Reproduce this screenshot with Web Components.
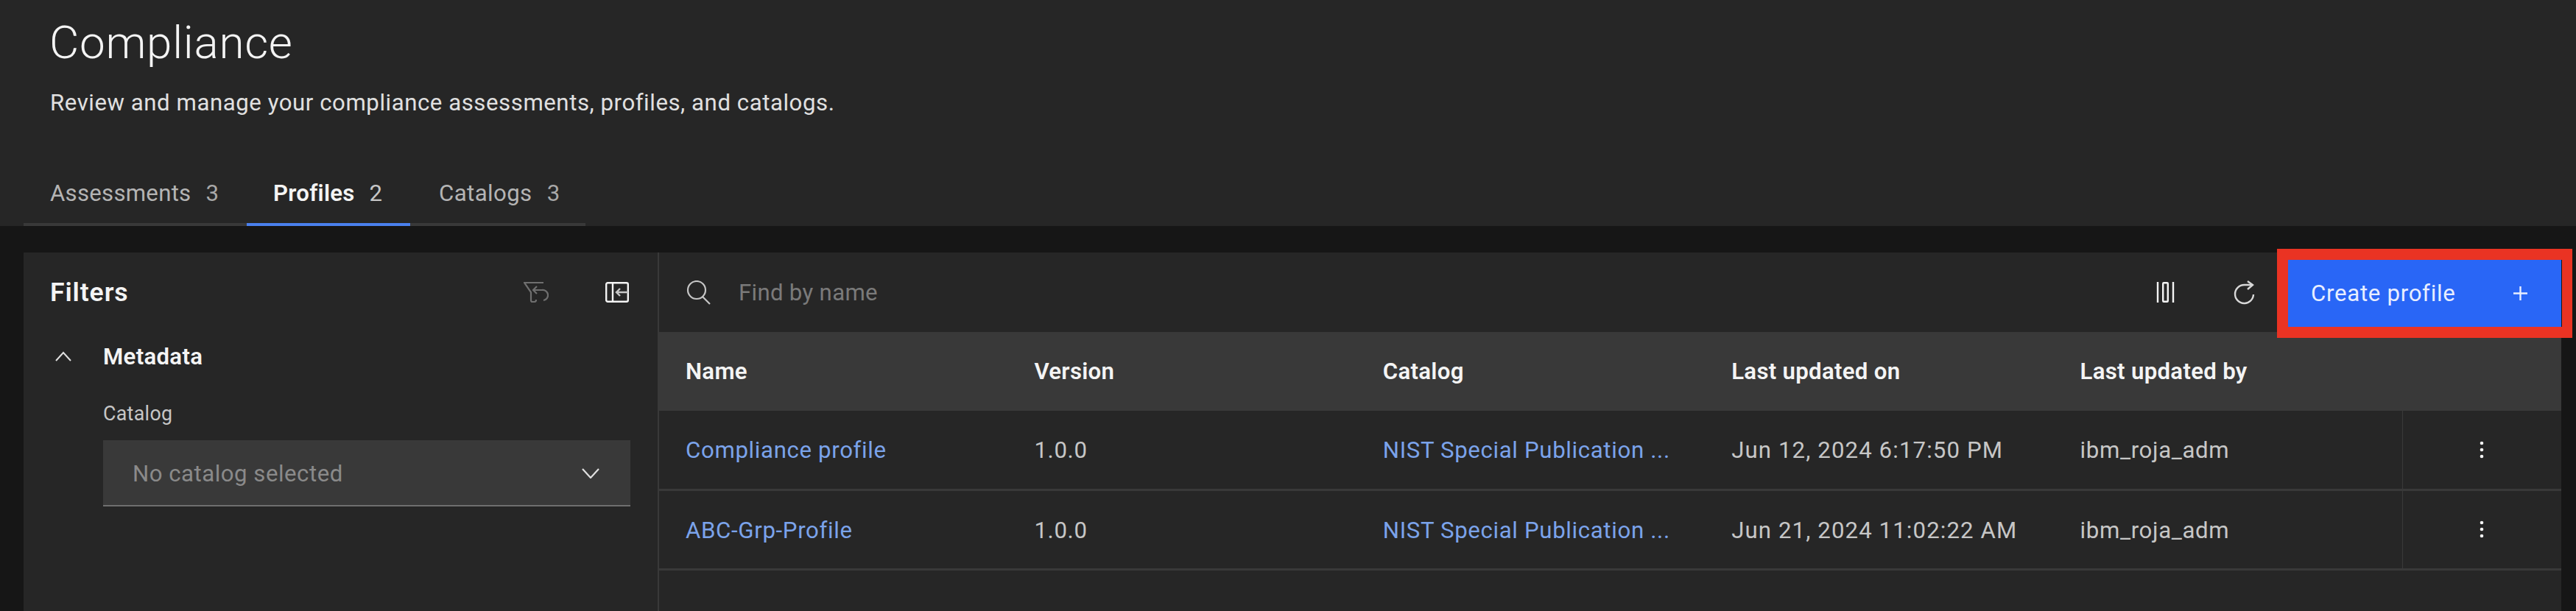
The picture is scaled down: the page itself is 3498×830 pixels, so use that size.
<!DOCTYPE html>
<html>
<head>
<meta charset="utf-8">
<title>Compliance</title>
<style>
    html, body { margin: 0; height: 100%; background: #161616; overflow: hidden; }
    body { font-family: Roboto, "Noto Sans", sans-serif; color: #f4f4f4; }
</style>
</head>
<body>
<compliance-page>
    <page-header slot="header" heading="Compliance" description="Review and manage your compliance assessments, profiles, and catalogs.">
        <page-tab label="Assessments" count="3" style="width:303px"></page-tab>
        <page-tab label="Profiles" count="2" active style="width:222px"></page-tab>
        <page-tab label="Catalogs" count="3" style="width:238px"></page-tab>
    </page-header>
    <filter-panel slot="filters"></filter-panel>
    <profile-toolbar slot="toolbar"></profile-toolbar>
    <profile-table slot="table">
        <table-row header>
            <span>Name</span><span>Version</span><span>Catalog</span><span>Last updated on</span><span>Last updated by</span>
        </table-row>
        <table-row>
            <a>Compliance profile</a><span>1.0.0</span><a>NIST Special Publication ...</a><span class="date">Jun 12, 2024 6:17:50 PM</span><span>ibm_roja_adm</span>
        </table-row>
        <table-row>
            <a>ABC-Grp-Profile</a><span>1.0.0</span><a>NIST Special Publication ...</a><span class="date">Jun 21, 2024 11:02:22 AM</span><span>ibm_roja_adm</span>
        </table-row>
    </profile-table>
</compliance-page>

<script>
class CompliancePage extends HTMLElement {
    constructor() {
        super();
        this.attachShadow({ mode: 'open' }).innerHTML = /*html*/`
            <style>
                :host { display: flex; flex-direction: column; height: 830px; }
                main { flex: 1; display: flex; margin: 36px 20px 0 32px; background: #262626; min-height: 0; }
                .side { width: 863px; box-sizing: border-box; flex: none; border-right: 2px solid #393939; }
                .content { flex: 1; min-width: 0; display: flex; flex-direction: column; }
            </style>
            <slot name="header"></slot>
            <main>
                <div class="side"><slot name="filters"></slot></div>
                <div class="content">
                    <slot name="toolbar"></slot>
                    <slot name="table"></slot>
                </div>
            </main>
        `;
    }
}

class PageHeader extends HTMLElement {
    connectedCallback() {
        this.attachShadow({ mode: 'open' }).innerHTML = /*html*/`
            <style>
                :host { display: block; height: 307px; box-sizing: border-box; background: #262626; padding: 20px 0 0 32px; }
                h1 { margin: 0 0 0 35px; font-size: 62px; line-height: 76px; font-weight: 300; color: #f4f4f4; letter-spacing: .7px; }
                p { margin: 24px 0 0 36px; font-size: 31.2px; line-height: 40px; color: #e0e0e0; letter-spacing: .55px; }
                nav { display: flex; margin-top: 76px; }
            </style>
            <h1>${this.getAttribute('heading')}</h1>
            <p>${this.getAttribute('description')}</p>
            <nav><slot></slot></nav>
        `;
    }
}

class PageTab extends HTMLElement {
    connectedCallback() {
        const active = this.hasAttribute('active');
        this.attachShadow({ mode: 'open' }).innerHTML = /*html*/`
            <style>
                :host { display: flex; box-sizing: border-box; height: 71px; padding: 0 0 14px 36px; align-items: center; gap: 20px;
                    font-size: 31.2px; letter-spacing: .25px; border-bottom: 4px solid ${active ? '#4a80ee' : '#393939'}; color: ${active ? '#f4f4f4' : '#b4b4b4'}; font-weight: ${active ? 600 : 400}; }
                b { font-weight: 400; color: ${active ? '#c6c6c6' : '#a8a8a8'}; }
                :host(:last-child) span { margin-left: 3px; letter-spacing: .4px; }
            </style>
            <span>${this.getAttribute('label')}</span><b>${this.getAttribute('count')}</b>
        `;
    }
}

class FilterPanel extends HTMLElement {
    constructor() {
        super();
        this.attachShadow({ mode: 'open' }).innerHTML = /*html*/`
            <style>
                :host { display: block; font-size: 31.2px; }
                .top { display: flex; align-items: center; height: 108px; padding: 0 39px 0 36px; box-sizing: border-box; }
                .top h2 { flex: 1; margin: 0; font-size: 35.6px; font-weight: 600; color: #f4f4f4; letter-spacing: .9px; }
                .top svg + svg { margin-left: 77px; }
                svg { display: block; flex: none; }
                .group { display: flex; align-items: center; height: 40px; margin-top: 13px; padding-left: 43px; }
                .group span { margin-left: 43px; font-weight: 600; color: #f4f4f4; letter-spacing: .3px; }
                .body { margin: 40px 37px 0 108px; }
                label { display: block; font-size: 26.8px; line-height: 36px; color: #c6c6c6; letter-spacing: .3px; }
                .select { display: flex; align-items: center; justify-content: space-between; box-sizing: border-box; height: 90px; margin-top: 18px;
                    padding: 2px 42px 0 40px; background: #393939; border-bottom: 2px solid #6f6f6f; color: #8a8a8a; letter-spacing: .5px; }
            </style>
            <div class="top">
                <h2>Filters</h2>
                <svg width="34" height="30" viewBox="0 0 34 30" fill="none" stroke="#6f6f6f" stroke-width="2.2">
                    <path d="M27 2H1l9 13v11q0 2 2 2h3q2 0 2-3"/>
                    <path d="M18 7l-5 5 5 5M13 12h12a7 7 0 0 1 2 14"/>
                </svg>
                <svg width="32" height="28" viewBox="0 0 32 28" fill="none" stroke="#f4f4f4" stroke-width="2.4">
                    <rect x="1.2" y="1.2" width="29.6" height="25.6" rx="2"/>
                    <path d="M10 1v26"/>
                    <path d="M31 14H15M20 9l-5 5 5 5" stroke="#c6c6c6"/>
                </svg>
            </div>
            <div class="group">
                <svg width="22" height="14" viewBox="0 0 22 14" fill="none" stroke="#e0e0e0" stroke-width="2"><path d="M1 13L11 2l10 11"/></svg>
                <span>Metadata</span>
            </div>
            <div class="body">
                <label>Catalog</label>
                <div class="select">
                    <span>No catalog selected</span>
                    <svg width="24" height="14" viewBox="0 0 24 14" fill="none" stroke="#e0e0e0" stroke-width="2.2"><path d="M1 1l11 12L23 1"/></svg>
                </div>
            </div>
        `;
    }
}

class ProfileToolbar extends HTMLElement {
    constructor() {
        super();
        this.attachShadow({ mode: 'open' }).innerHTML = /*html*/`
            <style>
                :host { display: flex; align-items: center; height: 108px; padding-left: 37px; font-size: 31.2px; color: #7a7a7a; }
                svg { display: block; flex: none; }
                .find { flex: 1; margin-left: 38px; letter-spacing: .3px; }
                .columns { margin-right: 80px; }
                .refresh { margin-right: 44px; }
                .create { position: relative; display: flex; align-items: center; justify-content: space-between; box-sizing: border-box; width: 371px; height: 91px;
                    margin: 2px 0 0 0; padding: 0 46px 0 31px; background: #2966f6; color: #e8eeff; letter-spacing: .7px; }
                .create::after { content: ''; position: absolute; inset: -15px; border: 15px solid #ea3323; border-right-width: 14px; pointer-events: none; }
            </style>
            <svg width="33" height="33" viewBox="0 0 33 33" fill="none" stroke="#c6c6c6" stroke-width="2.2">
                <circle cx="14" cy="13" r="12"/><path d="M22 22l10 10"/>
            </svg>
            <span class="find">Find by name</span>
            <svg class="columns" width="25" height="28" viewBox="0 0 25 28" fill="none" stroke="#f4f4f4" stroke-width="2.4">
                <path d="M2 0v28M23 0v28"/><rect x="9.2" y="1.2" width="6.6" height="25.6" rx="1"/>
            </svg>
            <svg class="refresh" width="30" height="33" viewBox="0 0 30 33" fill="none" stroke="#d8d8d8" stroke-width="2.4">
                <path d="M27 19a12.5 12.5 0 1 1-12.500-13H26"/><path d="M19 1l7 5-7 6"/>
            </svg>
            <div class="create">
                <span>Create profile</span>
                <svg width="19" height="19" viewBox="0 0 19 19" stroke="#e8eeff" stroke-width="2.4"><path d="M9.500 0v19M0 9.500h19"/></svg>
            </div>
        `;
    }
}

class ProfileTable extends HTMLElement {
    constructor() {
        super();
        this.attachShadow({ mode: 'open' }).innerHTML = /*html*/`
            <style>:host { display: block; }</style>
            <slot></slot>
        `;
    }
}

class TableRow extends HTMLElement {
    connectedCallback() {
        const header = this.hasAttribute('header');
        this.attachShadow({ mode: 'open' }).innerHTML = /*html*/`
            <style>
                :host { display: grid; grid-template-columns: repeat(5, 473.4px) 1fr; box-sizing: border-box; height: ${header ? 107 : 108.500}px;
                    background: ${header ? '#393939' : '#262626'}; border-bottom: ${header ? 0 : '3px solid #393939'};
                    font-size: 31.2px; color: #c6c6c6; font-weight: ${header ? 600 : 400}; letter-spacing: ${header ? '.3px' : '.65px'}; }
                ::slotted(*) { align-self: center; padding-left: 36px; padding-top: ${header ? 0 : 2}px; white-space: nowrap; overflow: hidden; }
                ::slotted(span) { color: ${header ? '#f4f4f4' : '#c6c6c6'}; }
                ::slotted(.date) { letter-spacing: 1.1px; }
                ::slotted(a) { color: #7ba3ea; }
                .actions { border-left: ${header ? 0 : '1px solid #393939'}; display: flex; align-items: center; justify-content: center; }
            </style>
            <slot></slot>
            <div class="actions">${header ? '' : `
                <svg width="6" height="24" viewBox="0 0 6 24" fill="#f4f4f4"><circle cx="3" cy="3" r="2.300"/><circle cx="3" cy="12" r="2.300"/><circle cx="3" cy="21" r="2.300"/></svg>`}
            </div>
        `;
    }
}

customElements.define('compliance-page', CompliancePage);
customElements.define('page-header', PageHeader);
customElements.define('page-tab', PageTab);
customElements.define('filter-panel', FilterPanel);
customElements.define('profile-toolbar', ProfileToolbar);
customElements.define('profile-table', ProfileTable);
customElements.define('table-row', TableRow);
</script>
</body>
</html>
